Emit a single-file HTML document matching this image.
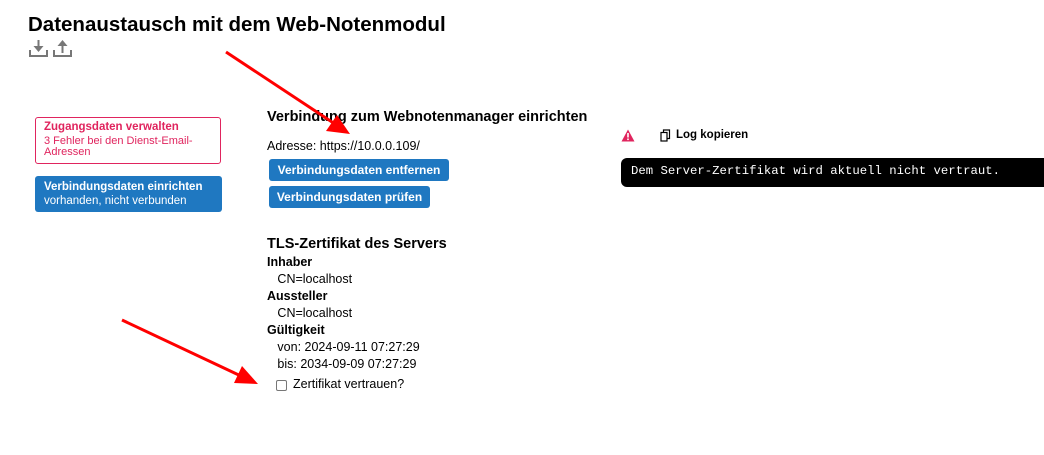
<!DOCTYPE html>
<html><head><meta charset="utf-8"><style>
body{margin:0;width:1044px;height:455px;background:#fff;font-family:"Liberation Sans","DejaVu Sans",sans-serif;color:#000;position:relative;overflow:hidden}
.a{position:absolute;white-space:nowrap}
.btn{position:absolute;white-space:nowrap;background:#1f78c1;color:#fff;border-radius:3px;font-weight:bold;font-size:12px;line-height:22px;text-align:center}
</style></head><body>
<div class="a" style="left:28px;top:13px;font-size:20.5px;font-weight:bold">Datenaustausch mit dem Web-Notenmodul</div>
<svg class="a" style="left:28px;top:38px" width="48" height="20" viewBox="0 0 48 20" fill="#777">
<rect x="1" y="12" width="2" height="7"/><rect x="1" y="17" width="19" height="2"/><rect x="18" y="12" width="2" height="7"/><rect x="9.5" y="2" width="2" height="7"/><path d="M5.5 8h10l-5 6z"/>
<rect x="25" y="12" width="2" height="7"/><rect x="25" y="17" width="19" height="2"/><rect x="42" y="12" width="2" height="7"/><rect x="33.5" y="7" width="2" height="8"/><path d="M29.5 8h10l-5-6z"/>
</svg>
<div class="a" style="left:35px;top:117px;width:186px;height:47px;border:1px solid #e0245e;border-radius:3px;box-sizing:border-box;color:#e0245e;font-size:11px;padding:4px 8px;line-height:11px;white-space:normal"><b style="font-size:11.5px">Zugangsdaten verwalten</b><br><span style="display:inline-block;margin-top:3px">3 Fehler bei den Dienst-Email-<br>Adressen</span></div>
<div class="a" style="left:35px;top:176px;width:187px;height:36px;background:#1f78c1;border-radius:3px;color:#fff;font-size:11.5px;padding:4px 9px;box-sizing:border-box;line-height:14px"><b>Verbindungsdaten einrichten</b><br>vorhanden, nicht verbunden</div>
<div class="a" style="left:267px;top:109px;font-size:14.5px;font-weight:bold">Verbindung zum Webnotenmanager einrichten</div>
<div class="a" style="left:267px;top:139px;font-size:12.5px">Adresse: https://10.0.0.109/</div>
<div class="btn" style="left:269px;top:159px;width:180px">Verbindungsdaten entfernen</div>
<div class="btn" style="left:269px;top:186px;width:161px">Verbindungsdaten prüfen</div>
<div class="a" style="left:267px;top:236px;font-size:14.5px;font-weight:bold">TLS-Zertifikat des Servers</div>
<div class="a" style="left:267px;top:254px;font-size:12.5px;line-height:17px"><b>Inhaber</b><br>&nbsp;&nbsp;&nbsp;CN=localhost<br><b>Aussteller</b><br>&nbsp;&nbsp;&nbsp;CN=localhost<br><b>Gültigkeit</b><br>&nbsp;&nbsp;&nbsp;von: 2024-09-11 07:27:29<br>&nbsp;&nbsp;&nbsp;bis: 2034-09-09 07:27:29</div>
<div class="a" style="left:276px;top:380px;width:9px;height:9px;border:1.5px solid #777;border-radius:2px"></div>
<div class="a" style="left:293px;top:377px;font-size:12.5px">Zertifikat vertrauen?</div>
<svg class="a" style="left:621px;top:129px" width="14" height="13" viewBox="0 0 14 13"><path d="M7 0.5L13.5 12.5H0.5z" fill="#e0245e"/><rect x="6.2" y="4" width="1.6" height="4.5" fill="#fff"/><rect x="6.2" y="9.5" width="1.6" height="1.6" fill="#fff"/></svg>
<svg class="a" style="left:660px;top:129px" width="11" height="13" viewBox="0 0 11 13" fill="none" stroke="#000" stroke-width="1.2"><rect x="1" y="3.5" width="6" height="8.5"/><path d="M3.5 3.5V1h6v8.5H7"/></svg>
<div class="a" style="left:676px;top:129px;font-size:11.5px;font-weight:bold">Log kopieren</div>
<div class="a" style="left:621px;top:158px;width:430px;height:29px;background:#000;border-radius:6px"></div>
<div class="a" style="left:631px;top:164px;font-family:'Liberation Mono',monospace;font-size:12.3px;color:#fff">Dem Server-Zertifikat wird aktuell nicht vertraut.</div>
<svg class="a" style="left:0;top:0" width="1044" height="455"><g stroke="#f00" stroke-width="3" fill="#f00"><line x1="226" y1="52" x2="335" y2="124"/><path d="M350 134L326 131L337 115z" stroke="none"/><line x1="122" y1="320" x2="243" y2="377"/><path d="M258 384L234 383L242 366z" stroke="none"/></g></svg>
</body></html>
